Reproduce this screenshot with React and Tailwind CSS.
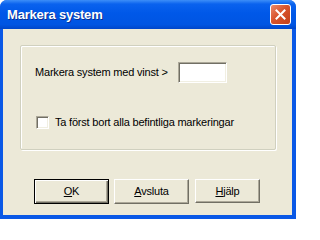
export default function App() {
  return (
    <div className="w-[296px] h-[219px] flex flex-col rounded-t-[7px] bg-[#0a58e6] font-['Liberation_Sans',Arial,sans-serif] text-[11px] text-black overflow-hidden">
      {/* Title bar */}
      <div className="h-[29px] shrink-0 flex items-center justify-between pl-[7px] pr-[5px] bg-[linear-gradient(to_bottom,#3d8ef8_0%,#0a62ee_14%,#0058e8_45%,#0055e2_85%,#0046c9_100%)]">
        <span className="text-white font-bold text-[13px] tracking-[-0.2px] [text-shadow:1px_1px_0_#0c2f8e]">Markera system</span>
        <div className="w-[21px] h-[21px] flex items-center justify-center rounded-[3px] border border-white bg-[linear-gradient(135deg,#eb8a6c_0%,#d9542c_45%,#c2401a_100%)]">
          <svg width="11" height="11" viewBox="0 0 11 11">
            <path d="M1.5 1.5 L9.5 9.5 M9.5 1.5 L1.5 9.5" stroke="white" strokeWidth="2" strokeLinecap="square" />
          </svg>
        </div>
      </div>

      {/* Window body */}
      <div className="flex-1 ml-[3px] mr-[4px] mb-[4px] bg-[#ece9d8] flex flex-col pt-[16px] pl-[17px] pr-[16px] tracking-[-0.2px]">
        <div className="h-[105px] rounded-[2px] border border-[#d0d0bf] shadow-[inset_1px_1px_0_#ffffff,1px_1px_0_#ffffff] pl-[14px]">
          <div className="mt-[16px] flex items-center">
            <span className="w-[143px]">Markera system med vinst &gt;</span>
            <div className="w-[49px] h-[21px] bg-white border border-t-[#aca899] border-l-[#aca899] border-b-white border-r-white shadow-[inset_1px_1px_0_#716f64,inset_-1px_-1px_0_#f1efe2]" />
          </div>
          <div className="mt-[31px] flex items-center gap-[6px] pl-[1px]">
            <div className="w-[13px] h-[13px] bg-white border border-t-[#aca899] border-l-[#aca899] border-b-white border-r-white shadow-[inset_1px_1px_0_#716f64,inset_-1px_-1px_0_#f1efe2]" />
            <span>Ta först bort alla befintliga markeringar</span>
          </div>
        </div>

        {/* Buttons */}
        <div className="mt-[29px] ml-[14px] flex">
          <button className="w-[75px] h-[25px] flex items-center justify-center border border-black bg-[#ece9d8] shadow-[inset_1px_1px_0_#ffffff,inset_-1px_-1px_0_#716f64,inset_-2px_-2px_0_#aca899]">
            <span><u>O</u>K</span>
          </button>
          <button className="ml-[5px] w-[75px] h-[25px] flex items-center justify-center border border-t-white border-l-white border-b-[#716f64] border-r-[#716f64] bg-[#ece9d8] shadow-[inset_-1px_-1px_0_#aca899]">
            <span><u>A</u>vsluta</span>
          </button>
          <button className="ml-[6px] w-[65px] h-[24px] flex items-center justify-center border border-t-white border-l-white border-b-[#716f64] border-r-[#716f64] bg-[#ece9d8] shadow-[inset_-1px_-1px_0_#aca899]">
            <span><u>H</u>jälp</span>
          </button>
        </div>
      </div>
    </div>
  );
}
